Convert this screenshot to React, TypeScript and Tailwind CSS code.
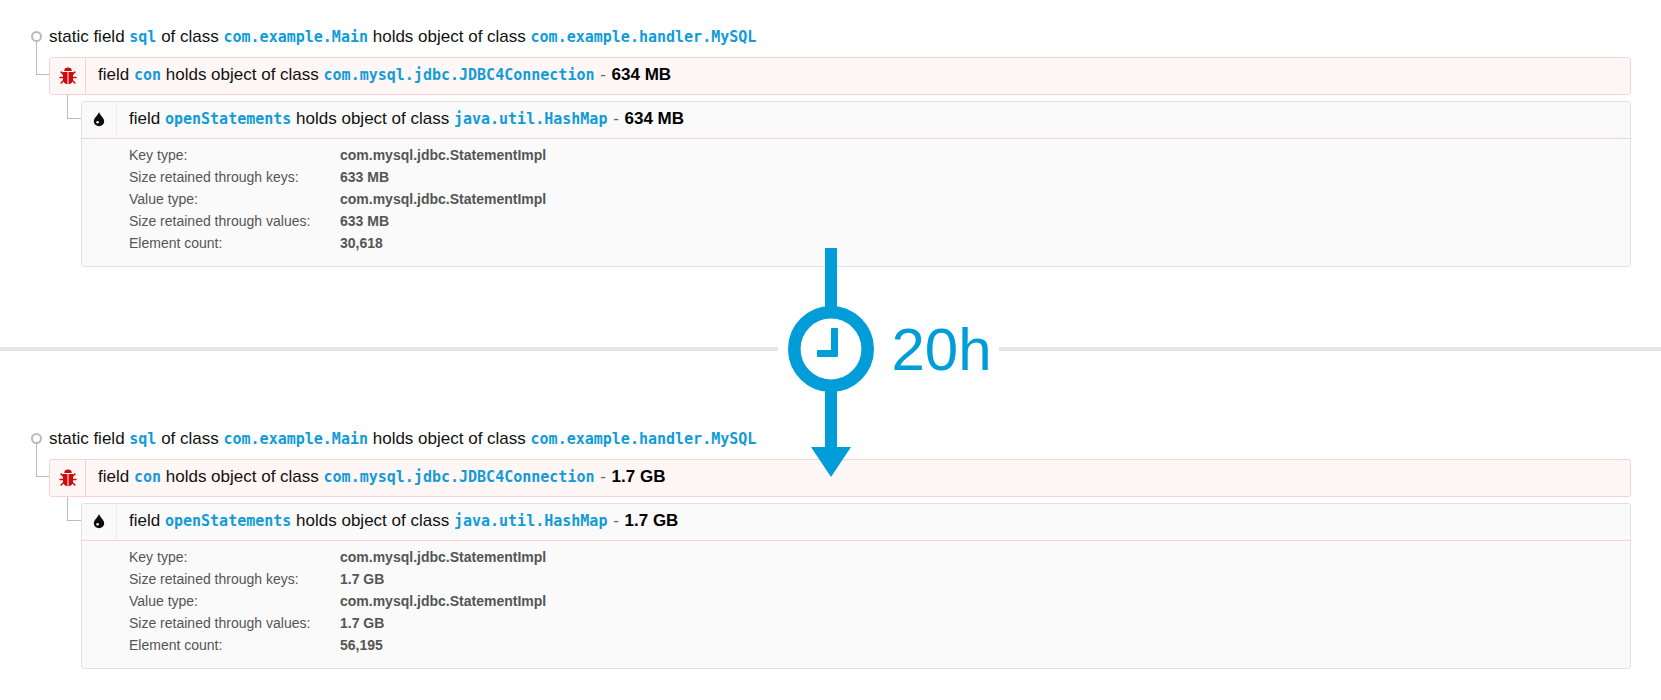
import React from "react";

type Snapshot = { retained: string; entries: string; count: string };

const snapshots: Snapshot[] = [
  { retained: "634 MB", entries: "633 MB", count: "30,618" },
  { retained: "1.7 GB", entries: "1.7 GB", count: "56,195" },
];

function Code({ children }: { children: string }) {
  return (
    <code className="font-['DejaVu_Sans_Mono',monospace] text-[15px] font-bold text-[#129bd9]">
      {children}
    </code>
  );
}

function Retained({ size }: { size: string }) {
  return (
    <>
      <span className="px-px text-[#666]"> - </span>
      <strong className="text-black">{size}</strong>
    </>
  );
}

function BugIcon() {
  return (
    <svg viewBox="0 0 18 18" className="size-[18px]" fill="#cc0c0c" aria-hidden="true">
      <path d="M5.2 4A3.800 3.400 0 0 1 12.800 4z" />
      <path d="M4 4.900h4.500v12.300C5.800 17 4 15.200 4 12.500z" />
      <path d="M14 4.900H9.500v12.300c2.700-.2 4.500-2 4.500-4.700z" />
      <path
        d="M4.500 7.400 1.700 4.600M4.500 10.400H.4M4.800 13.200l-3.100 3.200M13.500 7.400l2.800-2.800M13.500 10.400h4.100M13.200 13.200l3.100 3.200"
        fill="none"
        stroke="#cc0c0c"
        strokeWidth="1.500"
      />
    </svg>
  );
}

function DropIcon() {
  return (
    <svg viewBox="0 0 12 16" className="mb-[3px] h-4 w-3" aria-hidden="true">
      <path d="M6 .8C5.500 4 .8 6.800.8 10.200a5.200 5 0 0 0 10.400 0C11.200 6.800 6.500 4 6 .8z" fill="#0c0c0c" />
      <circle cx="4.600" cy="11.300" r="1.300" fill="#fafafa" />
    </svg>
  );
}

function LeakTree({ data }: { data: Snapshot }) {
  const details = [
    ["Key type:", "com.mysql.jdbc.StatementImpl"],
    ["Size retained through keys:", data.entries],
    ["Value type:", "com.mysql.jdbc.StatementImpl"],
    ["Size retained through values:", data.entries],
    ["Element count:", data.count],
  ];
  return (
    <section className="pl-[31px] pr-[30px] text-[17px] leading-6 text-[#111]">
      <div className="flex">
        <div className="flex w-[18px] flex-col pt-[6px]">
          <span className="size-[11px] rounded-full border-2 border-[#bbb]" />
          <span className="ml-[5px] flex-1 border-l border-[#bbb]" />
        </div>
        <p className="pb-2">
          static field <Code>sql</Code> of class <Code>com.example.Main</Code> holds object of class{" "}
          <Code>com.example.handler.MySQL</Code>
        </p>
      </div>
      <div className="flex items-start">
        <span className="ml-[5px] h-[18px] w-[13px] border-b border-l border-[#bbb]" />
        <div className="flex h-[38px] flex-1 rounded-[3px] border border-[#f5d3d3] bg-[#fff6f6]">
          <span className="flex w-9 items-center justify-center border-r border-[#f5d3d3]">
            <BugIcon />
          </span>
          <p className="self-center pb-0.5 pl-3">
            field <Code>con</Code> holds object of class <Code>com.mysql.jdbc.JDBC4Connection</Code>
            <Retained size={data.retained} />
          </p>
        </div>
      </div>
      <div className="flex items-start pl-9">
        <span className="h-6 w-[14px] border-b border-l border-[#bbb]" />
        <div className="mt-[6px] flex-1 rounded-[3px] border border-[#e2e2e2] bg-[#fafafa]">
          <div className="flex h-[37px] border-b border-[#f5d3d3]">
            <span className="flex w-[35px] items-center justify-center border-r border-[#eee]">
              <DropIcon />
            </span>
            <p className="self-center pb-0.5 pl-3">
              field <Code>openStatements</Code> holds object of class <Code>java.util.HashMap</Code>
              <Retained size={data.retained} />
            </p>
          </div>
          <table className="mb-[12px] ml-[47px] mt-[5px] text-left text-[14px] leading-[22px] text-[#555]">
            <tbody>
              {details.map(([label, value]) => (
                <tr key={label}>
                  <th scope="row" className="w-[211px] p-0 font-normal">
                    {label}
                  </th>
                  <td className="p-0 font-bold">{value}</td>
                </tr>
              ))}
            </tbody>
          </table>
        </div>
      </div>
    </section>
  );
}

function Elapsed() {
  return (
    <div className="grid h-[160px] grid-cols-[1fr_auto_1fr] items-center pt-1">
      <span className="h-1 bg-[#e5e5e5]" />
      <div className="relative mx-[10px] size-[86px]">
        <svg
          viewBox="0 0 86 230"
          className="absolute left-0 top-[-58px] h-[230px] w-[86px]"
          fill="#009dd9"
          aria-hidden="true"
        >
          <path d="M37 0h12v62H37zM37 140h12v59h14L43 229 23 199h14z" />
          <circle cx="43" cy="101" r="36.700" fill="#fff" stroke="#009dd9" strokeWidth="12.600" />
          <path d="M44 80h5a1 1 0 0 1 1 1v27a1 1 0 0 1-1 1H30a1 1 0 0 1-1-1v-5a1 1 0 0 1 1-1h13V81a1 1 0 0 1 1-1z" />
        </svg>
      </div>
      <div className="flex items-center">
        <span className="pl-2 pr-[7px] pt-0.5 text-[60px] leading-none text-[#009dd9]">20h</span>
        <span className="h-1 flex-1 bg-[#e5e5e5]" />
      </div>
    </div>
  );
}

export default function App() {
  return (
    <main className="min-h-screen bg-white py-[25px] font-['Liberation_Sans',Arial,sans-serif]">
      <LeakTree data={snapshots[0]} />
      <Elapsed />
      <LeakTree data={snapshots[1]} />
    </main>
  );
}
